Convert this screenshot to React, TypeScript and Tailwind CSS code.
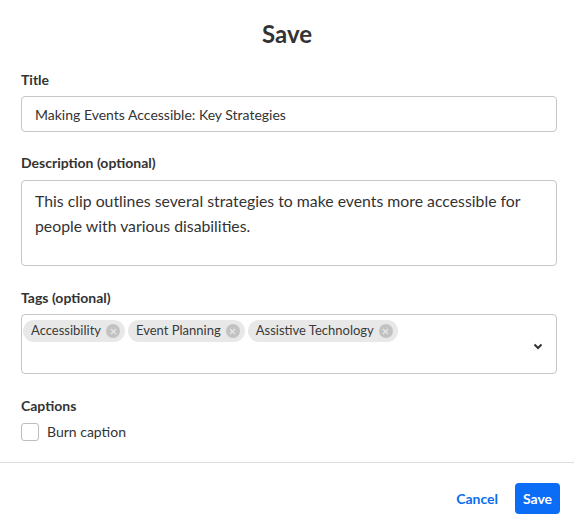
import { X } from 'lucide-react'

const TAGS = ['Accessibility', 'Event Planning', 'Assistive Technology']

function Label({ children }: { children: React.ReactNode }) {
  return <div className="text-[14px] leading-4 font-bold text-[#333]">{children}</div>
}

function Chip({ label }: { label: string }) {
  return (
    <span className="flex items-center gap-[5px] h-[22px] pl-[8px] pr-[5px] rounded-full bg-[#e8e8e8] text-[13px] text-[#3a3a3a]">
      {label}
      <span className="w-[14px] h-[14px] rounded-full bg-[#c2c2c2] flex items-center justify-center">
        <X size={9} strokeWidth={3} className="text-[#e8e8e8]" />
      </span>
    </span>
  )
}

export default function App() {
  return (
    <div className="w-[574px] h-[532px] bg-white flex flex-col font-['Lato','Liberation_Sans',sans-serif] text-[#333]">
      {/* Header */}
      <div className="pt-[19px] text-center text-[24px] leading-[30px] font-bold text-[#333]">Save</div>

      {/* Body */}
      <div className="pl-[21px] pr-[17px] pt-[23px] flex flex-col">
        <Label>Title</Label>
        <div className="mt-2 h-[36px] border border-[#c6c6c6] rounded-[4px] flex items-center px-[13px] text-[14px] text-[#333]">
          Making Events Accessible: Key Strategies
        </div>

        <div className="mt-[23px]">
          <Label>Description (optional)</Label>
        </div>
        <div className="mt-[9px] h-[86px] border border-[#c6c6c6] rounded-[4px] px-[13px] pt-[7px] text-[15.8px] leading-[25px] text-[#333]">
          This clip outlines several strategies to make events more accessible for people with various disabilities.
        </div>

        <div className="mt-[24px]">
          <Label>Tags (optional)</Label>
        </div>
        <div className="mt-2 h-[60px] border border-[#c6c6c6] rounded-[4px] flex items-start pl-[1px] pr-[13px] pt-[5px]">
          <div className="flex-1 flex flex-wrap gap-[3px]">
            {TAGS.map((t) => (
              <Chip key={t} label={t} />
            ))}
          </div>
          <svg width="10" height="7" viewBox="0 0 10 7" className="mt-[23px]">
            <path d="M1.5 1.5 L5 5 L8.5 1.5" fill="none" stroke="#333" strokeWidth="2" />
          </svg>
        </div>

        <div className="mt-[24px]">
          <Label>Captions</Label>
        </div>
        <label className="mt-[7px] flex items-center gap-[8px] text-[14px] text-[#333]">
          <span className="w-[18px] h-[18px] border border-[#bdbdbd] rounded-[3px]" />
          Burn caption
        </label>
      </div>

      <div className="mt-[20px] border-t border-[#dcdcdc]" />

      {/* Footer */}
      <div className="flex items-center justify-end gap-[17px] px-[14px] pt-[20px]">
        <button className="text-[14px] font-bold text-[#0b6cf0]">Cancel</button>
        <button className="h-[31px] w-[45px] rounded-[4px] bg-[#0b6cf5] text-white text-[14px] font-bold">Save</button>
      </div>
    </div>
  )
}
